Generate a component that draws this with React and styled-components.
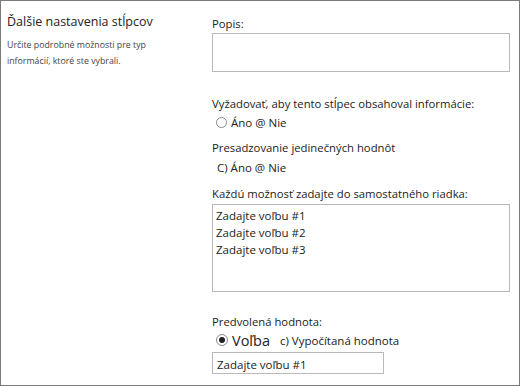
import React from "react";
import styled, { createGlobalStyle } from "styled-components";

const Global = createGlobalStyle`
  html, body { margin: 0; padding: 0; background: #fff; }
  body { font-family: "Open Sans", "Noto Sans", sans-serif; color: #262626; }
`;

const Frame = styled.div`
  width: 520px;
  height: 386px;
  box-sizing: border-box;
  border: 1px solid #7a7a7a;
  display: flex;
  overflow: hidden;
`;

const Side = styled.aside`
  width: 209px;
  padding: 12px 0 0 6px;
  box-sizing: border-box;
`;

const SideTitle = styled.h2`
  margin: 0;
  font-weight: 400;
  font-size: 12.5px;
  color: #222;
`;

const SideText = styled.p`
  margin: 7px 0 0;
  font-size: 8.8px;
  line-height: 16px;
  color: #444;
`;

const Main = styled.section`
  flex: 1;
  padding: 15px 8px 0 2px;
  display: flex;
  flex-direction: column;
`;

const Label = styled.div`
  font-size: 11.3px;
  line-height: 16px;
  color: #222;
  margin-top: ${(p) => p.$top || 0}px;
`;

const Box = styled.div`
  box-sizing: border-box;
  border: 1px solid #b9b9b9;
  width: ${(p) => p.$w || 298}px;
  height: ${(p) => p.$h}px;
  margin-top: 1px;
  background: #fff;
`;

const Lines = styled(Box)`
  padding: 2px 0 0 3px;
  font-size: 11.5px;
  line-height: 17px;
  color: #222;
  margin-top: 2px;
`;

const Choice = styled.div`
  display: flex;
  align-items: center;
  gap: 4px;
  padding-left: ${(p) => p.$pad || 4}px;
  height: ${(p) => p.$h || 20}px;
  font-size: 11.5px;
  color: #222;
  margin-top: ${(p) => p.$top || 0}px;
`;

const Radio = styled.span`
  width: ${(p) => (p.$on ? 12 : 11)}px;
  height: ${(p) => (p.$on ? 12 : 11)}px;
  border-radius: 50%;
  border: 1px solid #8a8a8a;
  box-sizing: border-box;
  display: inline-flex;
  align-items: center;
  justify-content: center;
  &::after {
    content: "";
    width: 6px;
    height: 6px;
    border-radius: 50%;
    background: ${(p) => (p.$on ? "#222" : "transparent")};
  }
`;

const Big = styled.span`
  font-size: 14.5px;
  margin-right: 6px;
`;

const Input = styled(Box)`
  display: flex;
  align-items: center;
  padding: 3px 0 0 4px;
  font-size: 11.5px;
  color: #222;
  margin-top: 2px;
`;

export default function App() {
  return (
    <>
      <Global />
      <Frame>
        <Side>
          <SideTitle>Ďalšie nastavenia stĺpcov</SideTitle>
          <SideText>
            Určite podrobné možnosti pre typ
            <br />
            informácií, ktoré ste vybrali.
          </SideText>
        </Side>
        <Main>
          <Label>Popis:</Label>
          <Box $h={39} />
          <Label $top={24}>Vyžadovať, aby tento stĺpec obsahoval informácie:</Label>
          <Choice>
            <Radio />
            Áno @ Nie
          </Choice>
          <Label $top={8}>Presadzovanie jedinečných hodnôt</Label>
          <Choice $pad={5} $h={22}>C) Áno @ Nie</Choice>
          <Label $top={8}>Každú možnosť zadajte do samostatného riadka:</Label>
          <Lines $h={88}>
            Zadajte voľbu #1
            <br />
            Zadajte voľbu #2
            <br />
            Zadajte voľbu #3
          </Lines>
          <Label $top={22}>Predvolená hodnota:</Label>
          <Choice>
            <Radio $on />
            <Big>Voľba</Big>
            c) Vypočítaná hodnota
          </Choice>
          <Input $w={172} $h={22}>Zadajte voľbu #1</Input>
        </Main>
      </Frame>
    </>
  );
}
